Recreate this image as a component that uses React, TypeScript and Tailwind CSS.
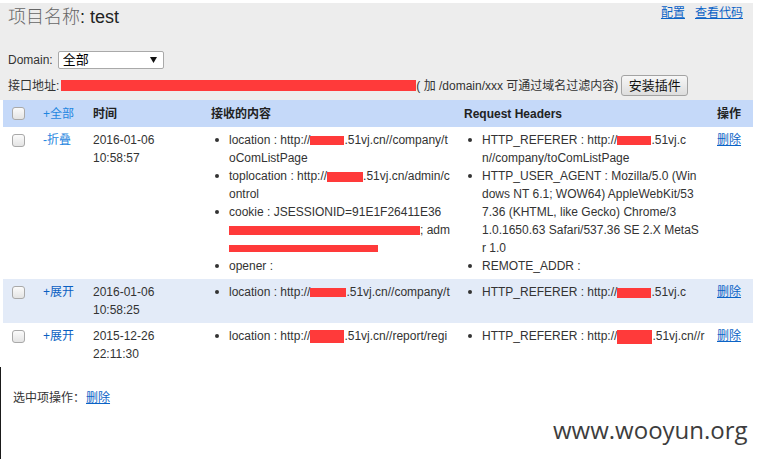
import React from "react";

const Red = ({ className }: { className: string }) => (
  <span className={`inline-block align-middle bg-[#ff3a3a] ${className}`} />
);

const Li = ({ children }: { children: React.ReactNode }) => (
  <li className="flex">
    <span className="flex w-[18px] shrink-0 pl-[4px] pt-[7px]">
      <span className="block h-[4px] w-[4px] rounded-full bg-[#333]" />
    </span>
    <div className="whitespace-nowrap">{children}</div>
  </li>
);

const Check = () => (
  <input
    type="checkbox"
    className="m-0 block h-[13px] w-[13px] appearance-none rounded-[3px] border border-[#a9a9a9] bg-gradient-to-b from-[#fbfbfb] to-[#e4e4e4]"
  />
);

const Del = () => (
  <a href="#" className="text-[#0b63c6] underline">
    删除
  </a>
);

export default function App() {
  return (
    <div className="relative h-[459px] w-[758px] overflow-hidden bg-white font-['Liberation_Sans','Noto_Sans_CJK_SC',sans-serif] text-[12px] text-[#333]">
      {/* top panel */}
      <div className="mt-[3px] flex w-[753px] flex-col bg-[#ededed] pb-[4px] pl-[8px] pr-[10px]">
        <div className="flex h-[24px] items-start justify-between">
          <div className="text-[18px] leading-[24px]">
            <span className="font-['Noto_Sans_CJK_SC'] font-light text-[#666]">项目名称</span>
            <span className="text-[#222]">: test</span>
          </div>
          <div className="flex gap-[10px] pt-[1px] leading-[18px]">
            <a href="#" className="text-[#0b63c6] underline">配置</a>
            <a href="#" className="text-[#0b63c6] underline">查看代码</a>
          </div>
        </div>
        <div className="mt-[24px] flex h-[18px] items-center">
          <span>Domain:</span>
          <div className="relative ml-[5px] h-[18px] w-[106px]">
            <select className="h-[18px] w-[106px] appearance-none rounded-[2px] border border-[#a9a9a9] bg-white pl-[4px] text-[13px] leading-[16px] text-black">
              <option>全部</option>
            </select>
            <svg className="pointer-events-none absolute right-[7px] top-[6px]" width="7" height="6" viewBox="0 0 7 6">
              <path d="M0 0 L7 0 L3.5 6 Z" fill="#111" />
            </svg>
          </div>
        </div>
        <div className="mt-[6px] flex h-[21px] items-center whitespace-nowrap">
          <span>接口地址:</span>
          <Red className="ml-[2px] h-[11px] w-[355px]" />
          <span>( 加 /domain/xxx 可通过域名过滤内容)</span>
          <button className="ml-[3px] h-[21px] w-[67px] rounded-[3px] border border-[#a3a3a3] bg-gradient-to-b from-[#f7f7f7] to-[#dddddd] text-[13px] leading-[19px] text-[#111]">
            安装插件
          </button>
        </div>
      </div>

      {/* table */}
      <table className="ml-[3px] w-[750px] table-fixed border-collapse leading-[18px]">
        <colgroup>
          <col className="w-[32px]" />
          <col className="w-[50px]" />
          <col className="w-[118px]" />
          <col className="w-[253px]" />
          <col className="w-[253px]" />
          <col className="w-[44px]" />
        </colgroup>
        <thead>
          <tr className="h-[27px] bg-[#c5d9f9] text-left">
            <th className="pl-[9px] align-middle font-normal"><Check /></th>
            <th className="pl-[8px] align-middle font-normal">
              <a href="#" className="text-[#1f86e0]">+全部</a>
            </th>
            <th className="pl-[8px] align-middle font-bold text-[#222]">时间</th>
            <th className="pl-[8px] align-middle font-bold text-[#222]">接收的内容</th>
            <th className="pl-[8px] align-middle font-bold text-[#222]">Request Headers</th>
            <th className="pl-[8px] align-middle font-bold text-[#222]">操作</th>
          </tr>
        </thead>
        <tbody>
          <tr className="bg-white">
            <td className="py-[4px] pl-[9px] align-top">
              <div className="flex h-[18px] items-center"><Check /></div>
            </td>
            <td className="py-[4px] pl-[8px] align-top">
              <a href="#" className="text-[#1f86e0]">-折叠</a>
            </td>
            <td className="py-[4px] pl-[8px] align-top">
              2016-01-06
              <br />
              10:58:57
            </td>
            <td className="py-[4px] pl-[8px] align-top">
              <ul>
                <Li>
                  location : http://<Red className="h-[9px] w-[34px]" />.51vj.cn//company/t
                  <br />
                  oComListPage
                </Li>
                <Li>
                  toplocation : http://<Red className="h-[10px] w-[36px]" />.51vj.cn/admin/c
                  <br />
                  ontrol
                </Li>
                <Li>
                  cookie : JSESSIONID=91E1F26411E36
                  <br />
                  <Red className="h-[9px] w-[191px]" />; adm
                  <br />
                  <Red className="h-[7px] w-[149px]" />
                </Li>
                <Li>opener :</Li>
              </ul>
            </td>
            <td className="py-[4px] pl-[8px] align-top">
              <ul>
                <Li>
                  HTTP_REFERER : http://<Red className="h-[9px] w-[34px]" />.51vj.c
                  <br />
                  n//company/toComListPage
                </Li>
                <Li>
                  HTTP_USER_AGENT : Mozilla/5.0 (Win
                  <br />
                  dows NT 6.1; WOW64) AppleWebKit/53
                  <br />
                  7.36 (KHTML, like Gecko) Chrome/3
                  <br />
                  1.0.1650.63 Safari/537.36 SE 2.X MetaS
                  <br />
                  r 1.0
                </Li>
                <Li>REMOTE_ADDR :</Li>
              </ul>
            </td>
            <td className="py-[4px] pl-[8px] align-top"><Del /></td>
          </tr>
          <tr className="bg-[#e3ebf8]">
            <td className="py-[4px] pl-[9px] align-top">
              <div className="flex h-[18px] items-center"><Check /></div>
            </td>
            <td className="py-[4px] pl-[8px] align-top">
              <a href="#" className="text-[#0b5fc2]">+展开</a>
            </td>
            <td className="py-[4px] pl-[8px] align-top">
              2016-01-06
              <br />
              10:58:25
            </td>
            <td className="py-[4px] pl-[8px] align-top">
              <ul>
                <Li>
                  location : http://<Red className="h-[9px] w-[36px]" />.51vj.cn//company/t
                </Li>
              </ul>
            </td>
            <td className="py-[4px] pl-[8px] align-top">
              <ul>
                <Li>
                  HTTP_REFERER : http://<Red className="h-[10px] w-[34px]" />.51vj.c
                </Li>
              </ul>
            </td>
            <td className="py-[4px] pl-[8px] align-top"><Del /></td>
          </tr>
          <tr className="bg-white">
            <td className="py-[4px] pl-[9px] align-top">
              <div className="flex h-[18px] items-center"><Check /></div>
            </td>
            <td className="py-[4px] pl-[8px] align-top">
              <a href="#" className="text-[#0b5fc2]">+展开</a>
            </td>
            <td className="py-[4px] pl-[8px] align-top">
              2015-12-26
              <br />
              22:11:30
            </td>
            <td className="py-[4px] pl-[8px] align-top">
              <ul>
                <Li>
                  location : http://<Red className="h-[13px] w-[34px]" />.51vj.cn//report/regi
                </Li>
              </ul>
            </td>
            <td className="py-[4px] pl-[8px] align-top">
              <ul>
                <Li>
                  HTTP_REFERER : http://<Red className="h-[14px] w-[35px]" />.51vj.cn//r
                </Li>
              </ul>
            </td>
            <td className="py-[4px] pl-[8px] align-top"><Del /></td>
          </tr>
        </tbody>
      </table>

      {/* footer */}
      <div className="h-[92px] border-l border-[#1a1a1a] pl-[12px] pt-[22px] leading-[18px]">
        选中项操作：<span className="ml-[1px]"><Del /></span>
      </div>

      {/* watermark */}
      <div className="absolute left-[553px] top-[418px] font-['Open_Sans',sans-serif] text-[24px] leading-none text-[#3d3d3d]">
        www.wooyun.org
      </div>
    </div>
  );
}
